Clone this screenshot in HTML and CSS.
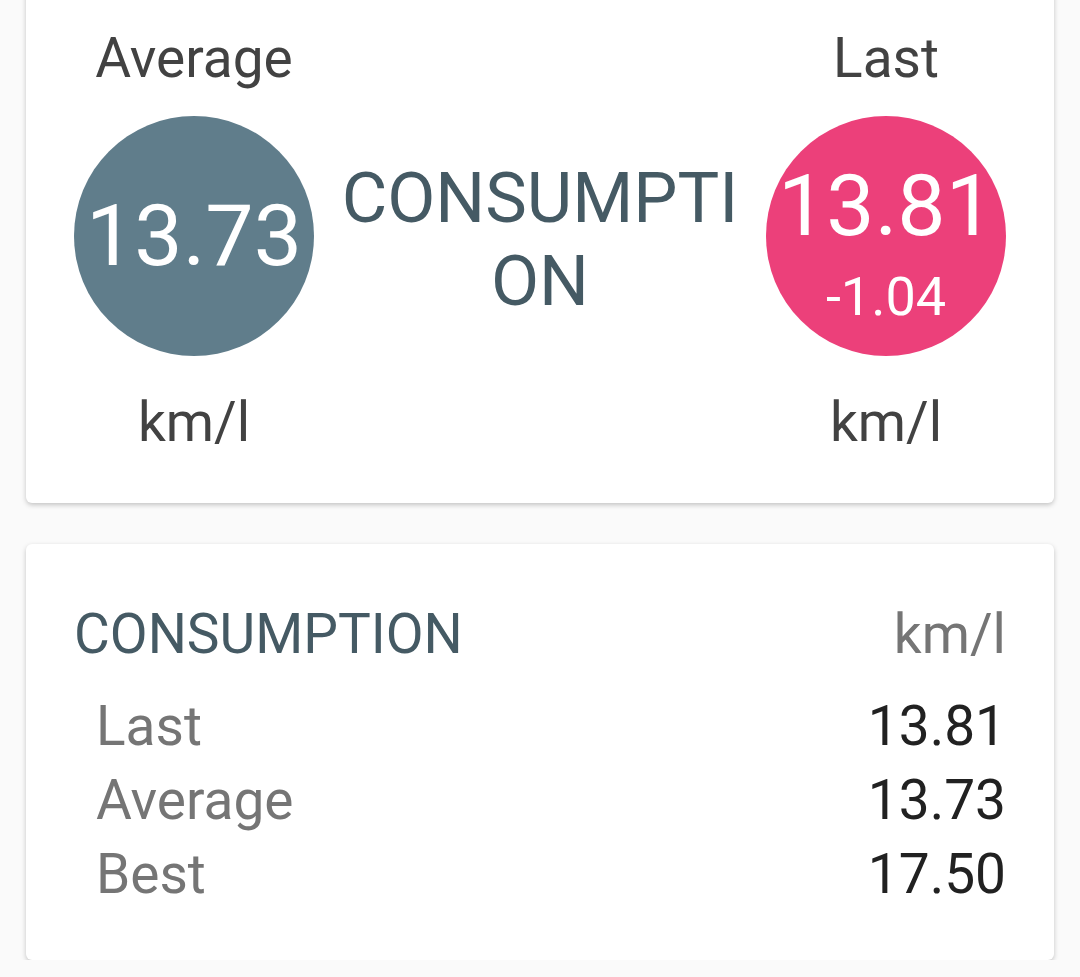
FILE: index.html
```html
<!DOCTYPE html>
<html lang="en">
<head>
    <meta charset="UTF-8">
    <meta name="viewport" content="width=device-width, initial-scale=1.0">
    <title>Consumption</title>
    <link rel="stylesheet" href="styles.css">
</head>
<body>

    <div class="card summary">
        <div class="label">Average</div>
        <div class="middle">CONSUMPTION</div>
        <div class="label">Last</div>

        <div class="circle average">
            <span class="big">13.73</span>
        </div>
        <div class="circle last">
            <span class="big">13.81</span>
            <span class="diff">-1.04</span>
        </div>

        <div class="unit">km/l</div>
        <div class="unit">km/l</div>
    </div>

    <div class="card stats">
        <div class="stats-head">
            <span class="title">CONSUMPTION</span>
            <span class="head-unit">km/l</span>
        </div>
        <div class="row"><span class="name">Last</span><span class="value">13.81</span></div>
        <div class="row"><span class="name">Average</span><span class="value">13.73</span></div>
        <div class="row"><span class="name">Best</span><span class="value">17.50</span></div>
    </div>

</body>
</html>
```

FILE: styles.css
```css
body {
    margin: 0;
    padding: 0 26px;
    background-color: #fafafa;
    font-family: Roboto, "Noto Sans", sans-serif;
}

.card {
    background: #fff;
    border-radius: 6px;
    box-shadow: 0 2px 5px rgba(0, 0, 0, 0.22);
}

/* top card: two circles with the title between */
.summary {
    margin-top: -22px;
    padding: 48px 48px 57px;
    display: grid;
    grid-template-columns: 240px 1fr 240px;
    grid-template-rows: 64px 240px 64px;
    row-gap: 26px;
    text-align: center;
}

.summary .label {
    font-size: 55px;
    line-height: 64px;
    color: #424242;
}

.summary .unit {
    font-size: 55px;
    line-height: 64px;
    color: #424242;
    margin-top: 8px;
}

.unit:first-of-type {
    grid-column: 1;
}

.middle {
    grid-column: 2;
    grid-row: 1 / 4;
    align-self: center;
    margin-top: 8px;
    padding: 0 10px;
    font-size: 70px;
    line-height: 83px;
    color: #455a64;
    word-break: break-all;
}

.circle {
    width: 240px;
    height: 240px;
    border-radius: 50%;
    color: #fff;
    display: flex;
    flex-direction: column;
    align-items: center;
    justify-content: center;
}

.circle.average {
    grid-column: 1;
    grid-row: 2;
    background-color: #607d8b;
}

.circle.last {
    grid-column: 3;
    grid-row: 2;
    background-color: #ec407a;
}

.big {
    font-size: 86px;
    line-height: 96px;
}

.last .big {
    margin-top: 10px;
}

.diff {
    font-size: 54px;
    line-height: 54px;
    margin-top: 16px;
}

.summary .label:nth-of-type(3) {
    grid-column: 3;
    grid-row: 1;
}

.summary .unit:last-child {
    grid-column: 3;
    grid-row: 3;
}

/* bottom card: list of values */
.stats {
    margin-top: 41px;
    padding: 58px 48px 49px;
}

.stats-head {
    display: flex;
    justify-content: space-between;
    font-size: 55px;
    line-height: 64px;
    margin-bottom: 23px;
}

.title {
    color: #455a64;
}

.head-unit {
    color: #757575;
}

.row {
    display: flex;
    justify-content: space-between;
    padding-left: 22px;
    font-size: 55px;
    line-height: 74px;
}

.name {
    color: #757575;
}

.value {
    color: #212121;
}
```
